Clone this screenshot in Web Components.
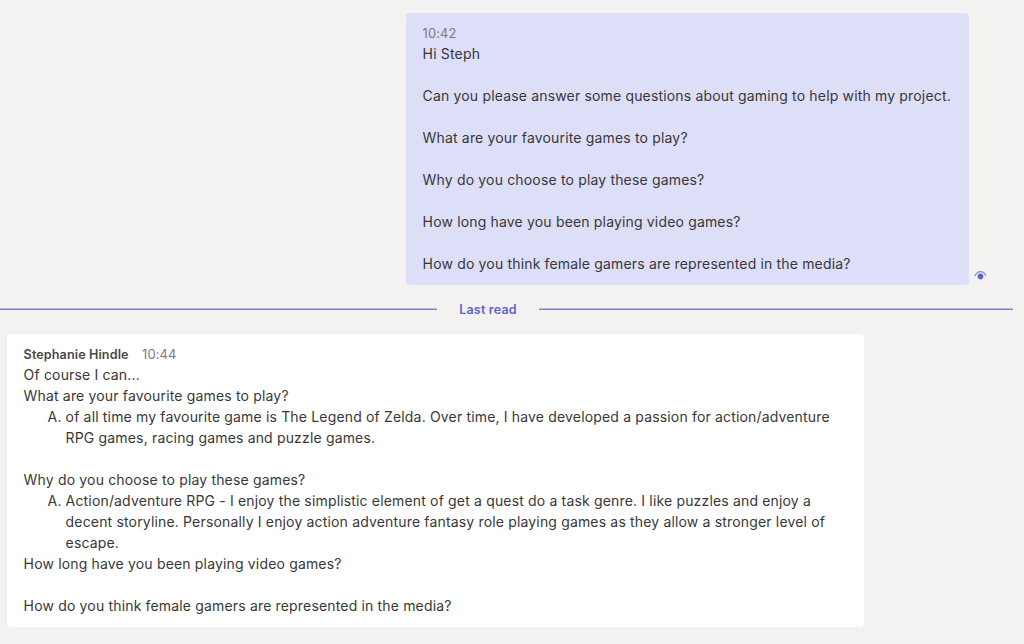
<!DOCTYPE html>
<html>
<head>
<meta charset="utf-8">
<style>
  html, body { margin: 0; height: 100%; }
  body { background: #f3f2f1; font-family: Inter, "Noto Sans", sans-serif; color: #383838; overflow: hidden; }
</style>
</head>
<body>
<chat-pane>
  <chat-bubble own time="10:42">
    <p>Hi Steph</p>
    <p>&nbsp;</p>
    <p>Can you please answer some questions about gaming to help with my project.</p>
    <p>&nbsp;</p>
    <p>What are your favourite games to play?</p>
    <p>&nbsp;</p>
    <p>Why do you choose to play these games?</p>
    <p>&nbsp;</p>
    <p>How long have you been playing video games?</p>
    <p>&nbsp;</p>
    <p>How do you think female gamers are represented in the media?</p>
  </chat-bubble>
  <last-read></last-read>
  <chat-bubble author="Stephanie Hindle" time="10:44">
    <p>Of course I can...</p>
    <p>What are your favourite games to play?</p>
    <answer-item>of all time my favourite game is The Legend of Zelda. Over time, I have developed a passion for action/adventure RPG games, racing games and puzzle games.</answer-item>
    <p>&nbsp;</p>
    <p>Why do you choose to play these games?</p>
    <answer-item>Action/adventure RPG - I enjoy the simplistic element of get a quest do a task genre. I like puzzles and enjoy a decent storyline. Personally I enjoy action adventure fantasy role playing games as they allow a stronger level of escape.</answer-item>
    <p>How long have you been playing video games?</p>
    <p>&nbsp;</p>
    <p>How do you think female gamers are represented in the media?</p>
  </chat-bubble>
</chat-pane>

<script>
class ChatPane extends HTMLElement {
  constructor() {
    super();
    this.attachShadow({ mode: 'open' });
    this.shadowRoot.innerHTML = `
      <style>
        :host { display: flex; flex-direction: column; padding: 13px 0 0 0; width: 1024px; box-sizing: border-box; }
      </style>
      <slot></slot>
    `;
  }
}

class ChatBubble extends HTMLElement {
  constructor() {
    super();
    this.attachShadow({ mode: 'open' });
  }

  connectedCallback() {
    const own = this.hasAttribute('own');
    const author = this.getAttribute('author');
    const time = this.getAttribute('time') || '';
    this.shadowRoot.innerHTML = `
      <style>
        :host { display: flex; align-items: flex-end; font-size: 14px; line-height: 21px; letter-spacing: 0.165px; }
        :host([own]) { margin-left: 406px; }
        :host(:not([own])) { margin-left: 7px; }
        .bubble {
          box-sizing: border-box;
          border-radius: 4px;
          padding: 10px 16px 11px 16.6px;
          width: ${own ? '563px' : '857px'};
          background: ${own ? '#dddef8' : '#ffffff'};
        }
        .head { display: flex; gap: 13.5px; align-items: baseline; height: 20px; line-height: 20px; font-size: 12.6px; letter-spacing: 0.1px; }
        .name { font-weight: 600; color: #484746; }
        .time { color: #7d7c7b; font-size: 13px; letter-spacing: 0.05px; }
        ::slotted(p) { margin: 0; }
        .seen { width: 13px; height: 13px; margin: 0 0 3px 5px; flex: none; }
      </style>
      <div class="bubble">
        <div class="head">
          ${author ? `<span class="name">${author}</span>` : ''}
          <span class="time">${time}</span>
        </div>
        <slot></slot>
      </div>
      ${own ? `<svg class="seen" viewBox="0 0 13 13" fill="none">
        <path d="M1.2 6.6C2.4 3.9 4.2 2.6 6.5 2.6s4.1 1.3 5.3 4" stroke="#8a8ed8" stroke-width="1.3" stroke-linecap="round"/>
        <circle cx="6.5" cy="7.4" r="2.8" fill="#5b5fc7"/>
      </svg>` : ''}
    `;
  }
}

class LastRead extends HTMLElement {
  constructor() {
    super();
    this.attachShadow({ mode: 'open' });
    this.shadowRoot.innerHTML = `
      <style>
        :host { display: flex; align-items: center; height: 49px; width: 1013px; box-sizing: border-box; }
        .line { height: 2px; margin-bottom: 1px; background: linear-gradient(#b8bae6 50%, #7a7ecb 50%); flex: 1; }
        .line.left { flex: none; width: 437px; }
        .label { width: 102px; text-align: center; font-size: 12.5px; font-weight: 600; color: #5f63c8; line-height: 16px; letter-spacing: 0.2px; }
      </style>
      <div class="line left"></div>
      <div class="label">Last read</div>
      <div class="line"></div>
    `;
  }
}

class AnswerItem extends HTMLElement {
  constructor() {
    super();
    this.attachShadow({ mode: 'open' });
    this.shadowRoot.innerHTML = `
      <style>
        :host { display: flex; padding-left: 24px; }
        .mark { width: 18px; flex: none; }
      </style>
      <span class="mark">A.</span>
      <span><slot></slot></span>
    `;
  }
}

customElements.define('chat-pane', ChatPane);
customElements.define('chat-bubble', ChatBubble);
customElements.define('last-read', LastRead);
customElements.define('answer-item', AnswerItem);
</script>
</body>
</html>
